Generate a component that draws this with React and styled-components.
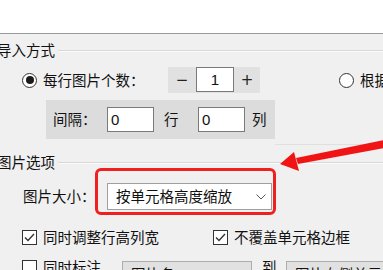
import styled, { createGlobalStyle } from 'styled-components';

const GlobalStyle = createGlobalStyle`
  html, body {
    margin: 0;
    padding: 0;
    background: #f0f0f0;
  }
  body {
    font-family: "Noto Sans CJK SC", "Noto Sans", sans-serif;
    font-size: 14.5px;
    color: #111;
  }
`;

const Radio = ({ checked }) => (
  <RadioRing>{checked && <RadioDot />}</RadioRing>
);

const Check = ({ checked }) => (
  <CheckBox>
    {checked && (
      <svg width="11" height="9" viewBox="0 0 11 9">
        <path d="M1 4.5 L4 7.5 L10 1" fill="none" stroke="#333" strokeWidth="1.4" />
      </svg>
    )}
  </CheckBox>
);

const App = () => {
  return (
    <Page>
      <GlobalStyle />
      <TopBar />

      <GroupTitle height={32}>
        <TitleText>导入方式</TitleText>
        <TitleLine />
      </GroupTitle>

      <Row height={28} pad={22}>
        <Radio checked />
        <Label width={125}>每行图片个数：</Label>
        <Spin>
          <SpinButton width={28}>−</SpinButton>
          <SpinInput>1</SpinInput>
          <SpinButton width={26}>+</SpinButton>
        </Spin>
        <RadioSlot>
          <Radio />
          <Label>根据</Label>
        </RadioSlot>
      </Row>

      <Panel>
        <Label width={54}>间隔：</Label>
        <NumInput>0</NumInput>
        <Label gapLeft={10} width={34}>行</Label>
        <NumInput>0</NumInput>
        <Label gapLeft={7}>列</Label>
      </Panel>

      <Divider />

      <GroupTitle height={34}>
        <TitleText>图片选项</TitleText>
        <TitleLine />
      </GroupTitle>

      <Row height={35} pad={23}>
        <Label width={84}>图片大小：</Label>
        <SelectWrap>
          <Select>
            按单元格高度缩放
            <Chevron viewBox="0 0 10 6">
              <path d="M0.5 0.5 L5 5 L9.5 0.5" fill="none" stroke="#555" strokeWidth="1" />
            </Chevron>
          </Select>
          <Highlight />
        </SelectWrap>
      </Row>

      <Row height={46} pad={22}>
        <Check checked />
        <Label width={170}>同时调整行高列宽</Label>
        <Check checked />
        <Label>不覆盖单元格边框</Label>
      </Row>

      <Row height={27} pad={22} alignTop>
        <Check />
        <Label width={79}>同时标注</Label>
        <GraySelect width={130}>图片名</GraySelect>
        <Label gapLeft={10} width={24}>到</Label>
        <GraySelect width={120}>图片右侧单元格</GraySelect>
      </Row>

      <Arrow width="383" height="270" viewBox="0 0 383 270">
        <polygon points="384,140 384,148 298,164 296,158" fill="#f01414" />
        <polygon points="280,164 294,152 299,171" fill="#f01414" />
      </Arrow>
    </Page>
  );
};

const Page = styled.div`
  position: relative;
  width: 383px;
  height: 270px;
  overflow: hidden;
  background: #f0f0f0;
`;

const TopBar = styled.div`
  height: 33px;
  background: #fff;
  border-bottom: 1px solid #9a9a9a;
`;

const GroupTitle = styled.div`
  display: flex;
  align-items: center;
  height: ${p => p.height}px;
  margin-left: -3px;
`;

const TitleText = styled.span`
  white-space: nowrap;
  line-height: 1;
`;

const TitleLine = styled.div`
  flex: 1;
  margin-left: 3px;
  margin-top: 2px;
  border-top: 1px solid #d8d8d8;
  border-bottom: 1px solid #fbfbfb;
`;

const Row = styled.div`
  display: flex;
  align-items: ${p => (p.alignTop ? 'flex-start' : 'center')};
  height: ${p => p.height}px;
  padding-left: ${p => p.pad}px;
  white-space: nowrap;
`;

const Label = styled.span`
  display: inline-block;
  flex: none;
  width: ${p => (p.width ? `${p.width}px` : 'auto')};
  margin-left: ${p => p.gapLeft || 0}px;
  line-height: 1;
  white-space: nowrap;
`;

const RadioRing = styled.span`
  flex: none;
  box-sizing: border-box;
  width: 15px;
  height: 15px;
  margin-right: 6px;
  border: 1.3px solid #333;
  border-radius: 50%;
  background: #fff;
  display: flex;
  align-items: center;
  justify-content: center;
`;

const RadioDot = styled.span`
  width: 8px;
  height: 8px;
  border-radius: 50%;
  background: #1a1a1a;
`;

const RadioSlot = styled.div`
  display: flex;
  align-items: center;
  margin-left: 79px;
`;

const Spin = styled.div`
  display: flex;
  height: 26px;
  background: #e1e1e1;
`;

const SpinButton = styled.div`
  width: ${p => p.width}px;
  display: flex;
  align-items: center;
  justify-content: center;
  font-family: "DejaVu Sans", sans-serif;
  font-size: 15px;
  color: #222;
`;

const SpinInput = styled.div`
  box-sizing: border-box;
  width: 38px;
  height: 25px;
  border: 1px solid #7a7a7a;
  background: #fff;
  display: flex;
  align-items: center;
  justify-content: center;
  font-family: "Liberation Sans", sans-serif;
  font-size: 15px;
`;

const Panel = styled.div`
  display: flex;
  align-items: center;
  width: 222px;
  height: 39px;
  margin: 6px 0 0 46px;
  padding-left: 7px;
  background: #dcdcdc;
`;

const NumInput = styled.div`
  box-sizing: border-box;
  width: 47px;
  height: 25px;
  padding: 0 3px;
  border: 1px solid #7a7a7a;
  background: #fff;
  display: flex;
  align-items: center;
  font-family: "Liberation Sans", sans-serif;
  font-size: 15px;
`;

const Divider = styled.div`
  margin-top: 5px;
  border-top: 1px solid #e0e0e0;
  margin-left: 275px;
`;

const SelectWrap = styled.div`
  position: relative;
`;

const Select = styled.div`
  box-sizing: border-box;
  width: 165px;
  height: 27px;
  padding-left: 8px;
  border: 1px solid #a0a0a0;
  background: #fff;
  display: flex;
  align-items: center;
  line-height: 1;
`;

const Chevron = styled.svg`
  width: 10px;
  height: 6px;
  margin-left: auto;
  margin-right: 5px;
`;

const Highlight = styled.div`
  position: absolute;
  left: -12px;
  top: -15px;
  right: -4px;
  bottom: -5px;
  border: 3.5px solid #ee2020;
  border-radius: 6px;
  pointer-events: none;
`;

const CheckBox = styled.span`
  flex: none;
  box-sizing: border-box;
  width: 15px;
  height: 15px;
  margin-right: 6px;
  border: 1px solid #333;
  background: #fff;
  display: flex;
  align-items: center;
  justify-content: center;
`;

const GraySelect = styled.div`
  box-sizing: border-box;
  flex: none;
  width: ${p => p.width}px;
  height: 27px;
  margin-top: 1px;
  padding-left: 8px;
  border: 1px solid #adadad;
  background: #e1e1e1;
  display: flex;
  align-items: center;
  line-height: 1;
`;

const Arrow = styled.svg`
  position: absolute;
  left: 0;
  top: 0;
  pointer-events: none;
`;

export default App;
